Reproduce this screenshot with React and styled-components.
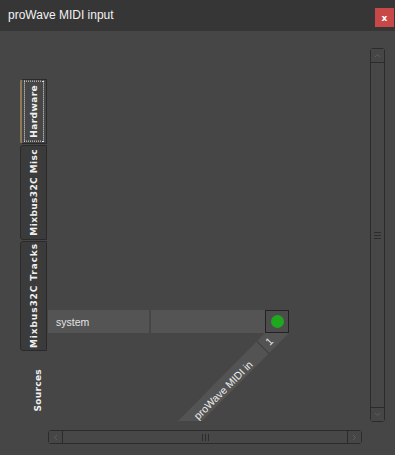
import styled, { createGlobalStyle } from 'styled-components'

const Global = createGlobalStyle`
  body {
    margin: 0;
    background: #464646;
  }
`

const Window = styled.div`
  width: 395px;
  height: 455px;
  background: #464646;
  display: flex;
  flex-direction: column;
  overflow: hidden;
`

const TitleBar = styled.div`
  height: 31px;
  background: #363636;
  display: flex;
  align-items: center;
  justify-content: space-between;
  padding: 0 1px 0 8px;
  box-sizing: border-box;
`

const Title = styled.span`
  font-family: "Liberation Sans", Arial, sans-serif;
  font-size: 12px;
  color: #f2f2f2;
  margin-top: -1px;
`

const CloseBtn = styled.div`
  width: 19px;
  height: 19px;
  margin-top: 4px;
  background: #c84848;
  color: #fff;
  font-family: "DejaVu Sans", sans-serif;
  font-weight: 700;
  font-size: 9px;
  display: flex;
  align-items: center;
  justify-content: center;
`

const Body = styled.div`
  flex: 1;
  display: flex;
  flex-direction: column;
`

const TopArea = styled.div`
  height: 391px;
  display: flex;
`

const Sidebar = styled.div`
  width: 27px;
  margin-left: 20px;
  padding-top: 48px;
  display: flex;
  flex-direction: column;
`

const Tab = styled.div`
  height: ${(p) => p.$h}px;
  box-sizing: border-box;
  border: 1px solid #2a2a2a;
  border-left: ${(p) => (p.$active ? '2px solid #8c7b56' : '1px solid #2a2a2a')};
  border-radius: 3px 0 0 3px;
  background: ${(p) => (p.$active ? '#464646' : '#3b3b3b')};
  display: flex;
  align-items: center;
  justify-content: center;
  margin-bottom: 1px;
`

const VText = styled.span`
  writing-mode: vertical-rl;
  transform: rotate(180deg);
  font-family: "DejaVu Sans", sans-serif;
  font-weight: 700;
  font-size: 9px;
  letter-spacing: ${(p) => p.$spacing || 0.4}px;
  color: #f0f0f0;
  white-space: nowrap;
`

const FocusText = styled(VText)`
  outline: 1px dotted #e0e0e0;
  outline-offset: 1px;
  padding: 2px 3px;
`

const SourcesLabel = styled(VText)`
  margin: 17px 0 0 13px;
  letter-spacing: 0.3px;
`

const Matrix = styled.div`
  flex: 1;
  padding-top: 279px;
  display: flex;
  flex-direction: column;
`

const Row = styled.div`
  display: flex;
  align-items: stretch;
  height: 23px;
  margin-left: 1px;
`

const Cell = styled.div`
  width: ${(p) => p.$w}px;
  margin-right: ${(p) => p.$gap || 0}px;
  background: #545454;
  display: flex;
  align-items: center;
  padding-left: 8px;
  box-sizing: border-box;
  font-family: "Liberation Sans", Arial, sans-serif;
  font-size: 10.5px;
  color: #e4e4e4;
`

const PortBtn = styled.div`
  width: 24px;
  box-sizing: border-box;
  border: 1px solid #222;
  background: #4c4c4c;
  display: flex;
  align-items: center;
  justify-content: center;
`

const Led = styled.div`
  width: 13px;
  height: 13px;
  border-radius: 50%;
  background: #1ea81e;
`

const ColHeader = styled.div`
  position: relative;
  width: 112px;
  height: 88px;
  margin-left: 131px;
  background: #535353;
  clip-path: polygon(87px 0, 111px 0, 24px 88px, 0 88px);
`

const HeaderText = styled.span`
  position: absolute;
  left: ${(p) => p.$x}px;
  top: ${(p) => p.$y}px;
  transform: translate(-50%, -50%) rotate(-45deg);
  font-family: "Liberation Sans", Arial, sans-serif;
  font-size: 10.5px;
  color: #ececec;
  white-space: nowrap;
`

const HeaderSep = styled.div`
  position: absolute;
  left: 76px;
  top: 14px;
  width: 18px;
  height: 1px;
  background: #3e3e3e;
  transform: rotate(45deg);
`

const VScroll = styled.div`
  width: 15px;
  height: 374px;
  margin: 17px 10px 0 0;
  box-sizing: border-box;
  border: 1px solid #2b2b2b;
  border-radius: 3px;
  display: flex;
  flex-direction: column;
  background: #444;
`

const HScroll = styled.div`
  width: 314px;
  height: 14px;
  margin: 8px 0 0 48px;
  box-sizing: border-box;
  border: 1px solid #2b2b2b;
  border-radius: 3px;
  display: flex;
  background: #444;
`

const Arrow = styled.div`
  flex: 0 0 13px;
  display: flex;
  align-items: center;
  justify-content: center;
  background: #464646;
  ${(p) => (p.$side === 'top' ? 'border-bottom: 1px solid #2b2b2b;' : '')}
  ${(p) => (p.$side === 'bottom' ? 'border-top: 1px solid #2b2b2b;' : '')}
  ${(p) => (p.$side === 'left' ? 'border-right: 1px solid #2b2b2b;' : '')}
  ${(p) => (p.$side === 'right' ? 'border-left: 1px solid #2b2b2b;' : '')}
`

const Thumb = styled.div`
  flex: 1;
  display: flex;
  align-items: center;
  justify-content: center;
  background: #474747;
`

const Grip = styled.div`
  display: flex;
  flex-direction: ${(p) => (p.$vertical ? 'column' : 'row')};
  gap: 2px;
`

const GripLine = styled.div`
  background: #2c2c2c;
  width: ${(p) => (p.$vertical ? '7px' : '1px')};
  height: ${(p) => (p.$vertical ? '1px' : '7px')};
`

const Chevron = ({ rot }) => (
  <svg width="7" height="7" viewBox="0 0 7 7" style={{ transform: `rotate(${rot}deg)` }}>
    <path d="M1 5 L3.5 2.5 L6 5" fill="none" stroke="#5c5c5c" strokeWidth="1" />
  </svg>
)

const GripLines = ({ vertical }) => (
  <Grip $vertical={vertical}>
    <GripLine $vertical={vertical} />
    <GripLine $vertical={vertical} />
    <GripLine $vertical={vertical} />
  </Grip>
)

const App = () => {
  return (
    <Window>
      <Global />
      <TitleBar>
        <Title>proWave MIDI input</Title>
        <CloseBtn>x</CloseBtn>
      </TitleBar>
      <Body>
        <TopArea>
          <Sidebar>
            <Tab $h={65} $active>
              <FocusText>Hardware</FocusText>
            </Tab>
            <Tab $h={95}>
              <VText>Mixbus32C Misc</VText>
            </Tab>
            <Tab $h={110}>
              <VText $spacing={0.9}>Mixbus32C Tracks</VText>
            </Tab>
            <SourcesLabel>Sources</SourcesLabel>
          </Sidebar>
          <Matrix>
            <Row>
              <Cell $w={101} $gap={2}>system</Cell>
              <Cell $w={114} />
              <PortBtn>
                <Led />
              </PortBtn>
            </Row>
            <ColHeader>
              <HeaderSep />
              <HeaderText $x={91} $y={8}>1</HeaderText>
              <HeaderText $x={45} $y={57}>proWave MIDI in</HeaderText>
            </ColHeader>
          </Matrix>
          <VScroll>
            <Arrow $side="top"><Chevron rot={0} /></Arrow>
            <Thumb><GripLines vertical /></Thumb>
            <Arrow $side="bottom"><Chevron rot={180} /></Arrow>
          </VScroll>
        </TopArea>
        <HScroll>
          <Arrow $side="left"><Chevron rot={-90} /></Arrow>
          <Thumb><GripLines /></Thumb>
          <Arrow $side="right"><Chevron rot={90} /></Arrow>
        </HScroll>
      </Body>
    </Window>
  )
}

export default App
